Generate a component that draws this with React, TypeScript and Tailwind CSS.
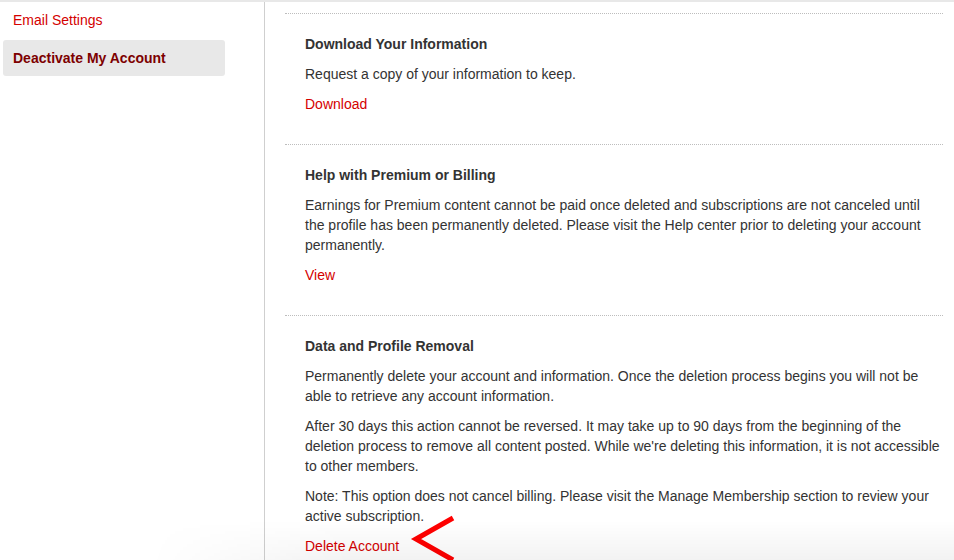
import React from "react";

const font = { fontFamily: '"Liberation Sans", Arial, Helvetica, sans-serif' };

function Section({ title, children, link }: { title: string; children: React.ReactNode; link: React.ReactNode }) {
  return (
    <div className="border-t border-dotted border-[#bdbdbd] pt-5 pb-[30px] pl-5">
      <h3 className="font-bold text-[14px] leading-5 text-[#333]">{title}</h3>
      {children}
      <div className="mt-[10px] text-[14px] leading-5 text-[#d40000]">{link}</div>
    </div>
  );
}

function P({ children }: { children: React.ReactNode }) {
  return <p className="mt-[10px] text-[14px] leading-5 text-[#333]">{children}</p>;
}

export default function App() {
  return (
    <div style={font} className="relative flex h-[560px] w-[954px] overflow-hidden bg-white border-t-2 border-[#e8e8e8]">
      <aside className="w-[265px] shrink-0 border-r border-[#cfcfcf] pl-[3px] pr-[39px] flex flex-col gap-[2px]">
        <div className="px-[10px] py-2 text-[14px] leading-5 text-[#d40000]">Email Settings</div>
        <div className="rounded-[3px] bg-[#e8e8e8] px-[10px] py-2 text-[14px] leading-5 font-bold text-[#7d0000]">
          Deactivate My Account
        </div>
      </aside>
      <main className="flex-1 pl-5 pr-[11px] pt-[11px]">
        <Section title="Download Your Information" link="Download">
          <P>Request a copy of your information to keep.</P>
        </Section>
        <Section title="Help with Premium or Billing" link="View">
          <P>
            Earnings for Premium content cannot be paid once deleted and subscriptions are not canceled until
            <br />
            the profile has been permanently deleted. Please visit the Help center prior to deleting your account
            <br />
            permanently.
          </P>
        </Section>
        <Section
          title="Data and Profile Removal"
          link={
            <span className="relative">
              Delete Account
              <svg className="absolute left-[104px] top-[-23px]" width="46" height="46" viewBox="0 0 46 46">
                <path d="M44 3 L7 24 L44 45" fill="none" stroke="#ff0000" strokeWidth="5" strokeLinejoin="miter" />
              </svg>
            </span>
          }
        >
          <P>
            Permanently delete your account and information. Once the deletion process begins you will not be
            <br />
            able to retrieve any account information.
          </P>
          <P>
            After 30 days this action cannot be reversed. It may take up to 90 days from the beginning of the
            <br />
            deletion process to remove all content posted. While we're deleting this information, it is not accessible
            <br />
            to other members.
          </P>
          <P>
            Note: This option does not cancel billing. Please visit the Manage Membership section to review your
            <br />
            active subscription.
          </P>
        </Section>
      </main>
      <div className="pointer-events-none absolute bottom-0 left-[150px] right-0 h-[40px] bg-gradient-to-b from-transparent to-black/[0.05] [mask-image:linear-gradient(to_right,transparent,black_200px)]" />
    </div>
  );
}
